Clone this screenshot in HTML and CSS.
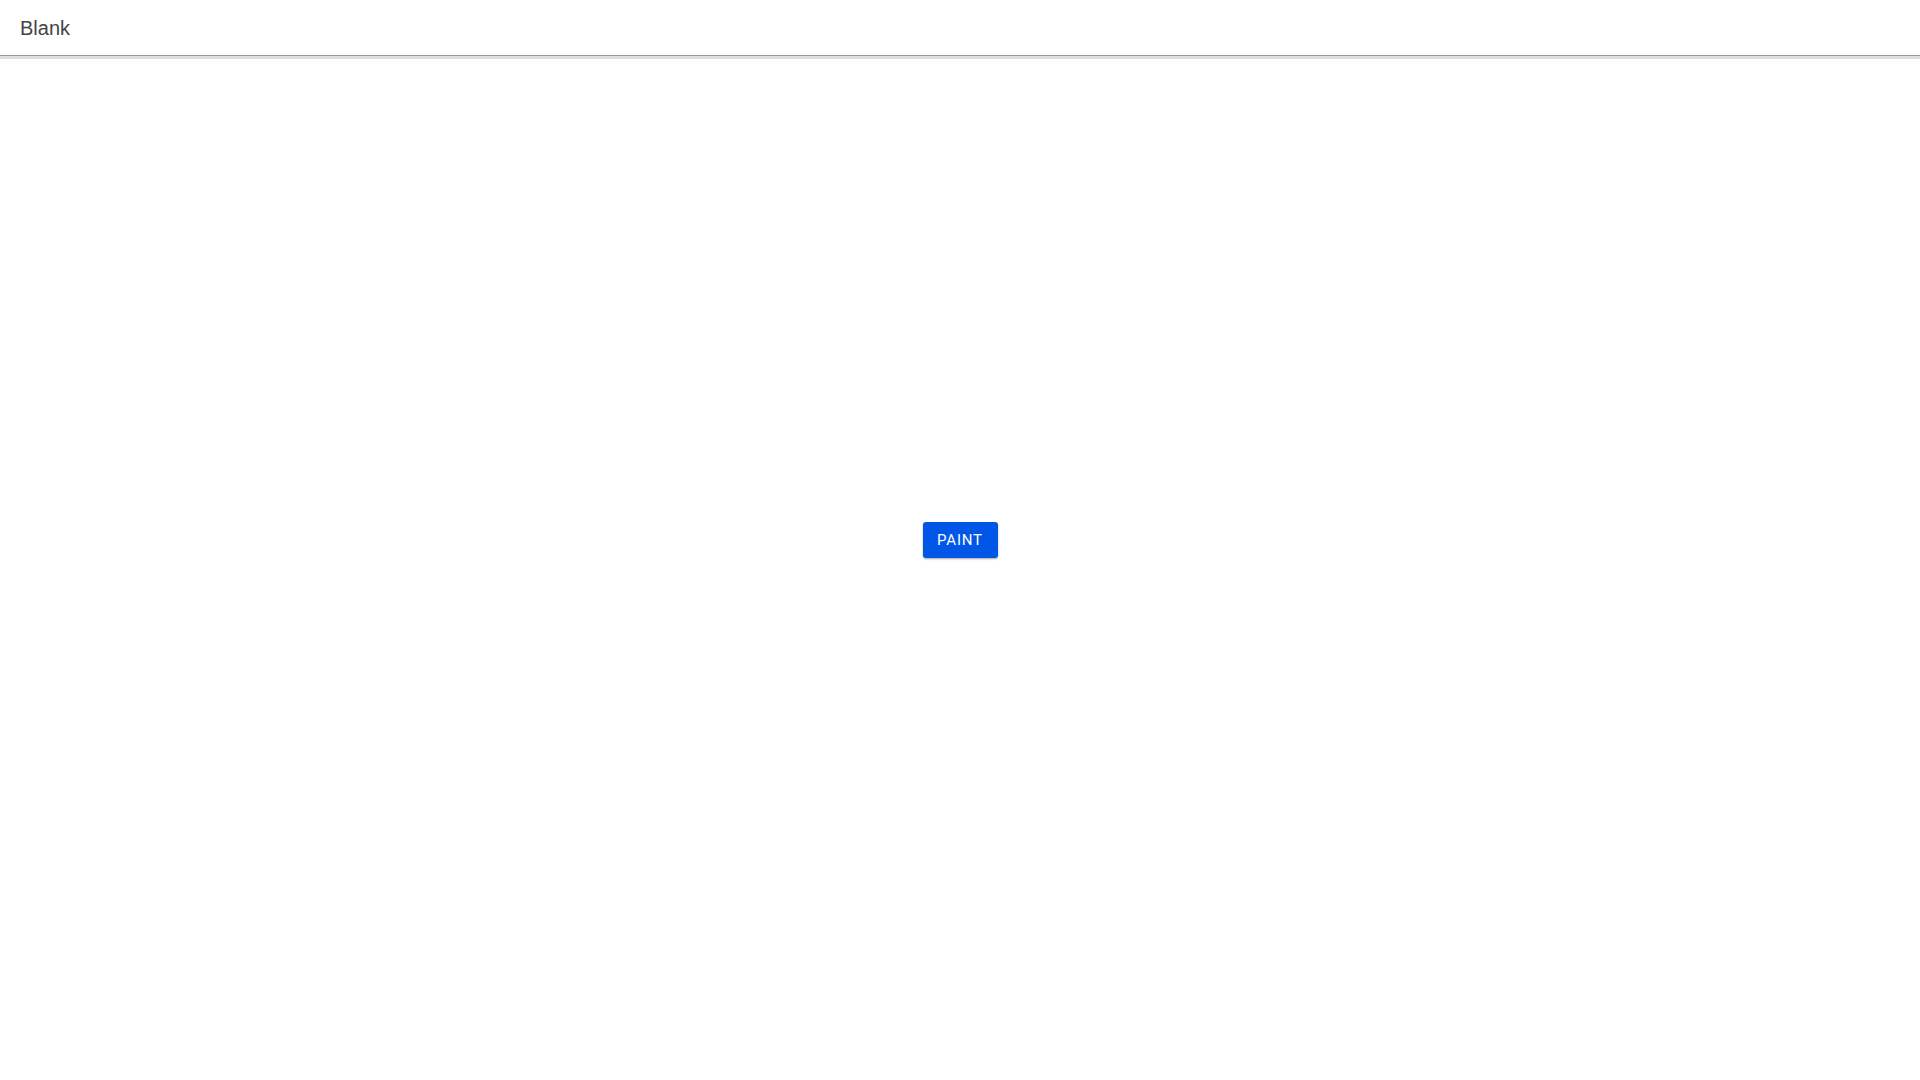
FILE: index.html
```html
<!DOCTYPE html>
<html>
<head>
<meta charset="utf-8">
<link rel="stylesheet" href="styles.css">
</head>
<body>
<header class="topbar"><span class="title">Blank</span></header>
<main class="stage">
  <button class="paint-btn">PAINT</button>
</main>
</body>
</html>
```
FILE: styles.css
```css
html, body {
  margin: 0;
  padding: 0;
  height: 100%;
  background: #ffffff;
  font-family: "Liberation Sans", Arial, sans-serif;
}
body {
  display: flex;
  flex-direction: column;
}
.topbar {
  height: 56px;
  flex: 0 0 auto;
  box-sizing: border-box;
  border-bottom: 1px solid #9a9a9a;
  box-shadow: 0 3px 0 #dedede;
  display: flex;
  align-items: center;
  padding: 0 20px;
  padding-top: 1px;
}
.title {
  font-size: 20px;
  color: #444444;
}
.stage {
  flex: 1;
  display: flex;
  align-items: center;
  justify-content: center;
  padding-bottom: 56px;
}
.paint-btn {
  background: #0057e7;
  color: #ffffff;
  border: none;
  border-radius: 3px;
  width: 75px;
  height: 36px;
  font-family: Roboto, "Liberation Sans", sans-serif;
  font-size: 15px;
  letter-spacing: 0.8px;
  padding: 0;
  box-shadow: 0 1px 2px rgba(0,0,0,0.35);
}
```
